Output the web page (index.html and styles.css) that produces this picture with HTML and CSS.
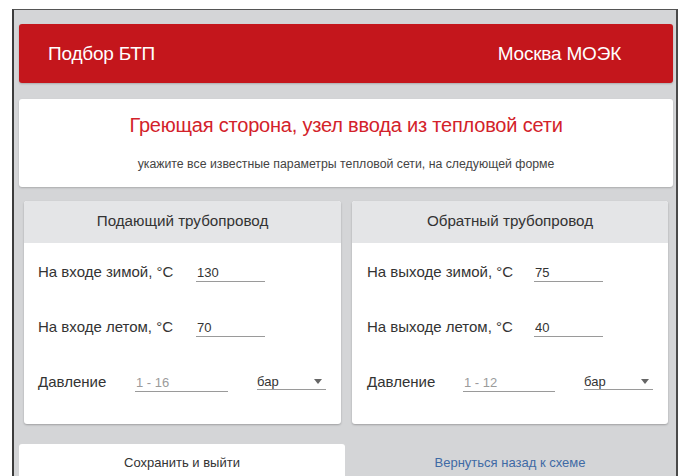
FILE: index.html
```html
<!DOCTYPE html>
<html lang="ru">
<head>
<meta charset="utf-8">
<title>Подбор БТП</title>
<link rel="stylesheet" href="styles.css">
</head>
<body>
<div class="frame">
  <header class="topbar">
    <span class="topbar-title">Подбор БТП</span>
    <span class="topbar-city">Москва МОЭК</span>
  </header>

  <section class="intro">
    <h1 class="intro-title">Греющая сторона, узел ввода из тепловой сети</h1>
    <p class="intro-hint">укажите все известные параметры тепловой сети, на следующей форме</p>
  </section>

  <div class="panels">
    <section class="panel panel-supply">
      <div class="panel-head">Подающий трубопровод</div>
      <div class="panel-body">
        <div class="row">
          <label class="row-label">На входе зимой, °C</label>
          <input class="field field-temp" type="text" value="130">
        </div>
        <div class="row">
          <label class="row-label">На входе летом, °C</label>
          <input class="field field-temp" type="text" value="70">
        </div>
        <div class="row">
          <label class="row-label row-label-short">Давление</label>
          <input class="field field-pressure" type="text" placeholder="1 - 16">
          <div class="unit">
            <span>бар</span>
            <span class="unit-caret"></span>
          </div>
        </div>
      </div>
    </section>

    <section class="panel panel-return">
      <div class="panel-head">Обратный трубопровод</div>
      <div class="panel-body">
        <div class="row">
          <label class="row-label">На выходе зимой, °C</label>
          <input class="field field-temp" type="text" value="75">
        </div>
        <div class="row">
          <label class="row-label">На выходе летом, °C</label>
          <input class="field field-temp" type="text" value="40">
        </div>
        <div class="row">
          <label class="row-label row-label-short">Давление</label>
          <input class="field field-pressure" type="text" placeholder="1 - 12">
          <div class="unit">
            <span>бар</span>
            <span class="unit-caret"></span>
          </div>
        </div>
      </div>
    </section>
  </div>

  <div class="actions">
    <button class="btn-save" type="button">Сохранить и выйти</button>
    <a class="link-back" href="#">Вернуться назад к схеме</a>
  </div>
</div>
</body>
</html>
```

FILE: styles.css
```css
* {
  box-sizing: border-box;
}

html, body {
  margin: 0;
  padding: 0;
  background: #ffffff;
  overflow: hidden;
}

body {
  font-family: "Liberation Sans", Arial, sans-serif;
  color: #333;
}

.frame {
  margin: 9px 4px 0 12px;
  height: 480px;
  background: #d4d5d7;
  border-top: 1px solid #555;
  border-left: 2px solid #3c3c3c;
  border-right: 2px solid #4a4a4a;
  padding: 14px 3px 0 5px;
}

/* red application bar */
.topbar {
  height: 59px;
  background: #c4161c;
  border-radius: 3px;
  box-shadow: 0 1px 2px rgba(0, 0, 0, 0.2);
  color: #fff;
  display: flex;
  align-items: center;
  justify-content: space-between;
  padding: 0 52px 0 29px;
  font-size: 19px;
  letter-spacing: -0.2px;
}

/* intro card */
.intro {
  margin-top: 16px;
  height: 88px;
  background: #fff;
  border-radius: 3px;
  box-shadow: 0 1px 2px rgba(0, 0, 0, 0.2);
  text-align: center;
  padding-top: 14px;
}

.intro-title {
  margin: 0;
  font-weight: 400;
  font-size: 20px;
  line-height: 24px;
  color: #d3222a;
  letter-spacing: -0.2px;
}

.intro-hint {
  margin: 20px 0 0;
  font-size: 12.3px;
  line-height: 14px;
  color: #444;
}

/* the two pipeline panels */
.panels {
  margin-top: 14px;
  padding: 0 5px;
  display: grid;
  grid-template-columns: 317px 316px;
  column-gap: 11px;
}

.panel {
  background: #fff;
  border-radius: 3px;
  box-shadow: 0 1px 2px rgba(0, 0, 0, 0.25);
  height: 223px;
  overflow: hidden;
}

.panel-head {
  height: 42px;
  padding-bottom: 3px;
  background: #e4e5e7;
  display: flex;
  align-items: center;
  justify-content: center;
  font-size: 15.2px;
  color: #333;
}

.panel-body {
  padding-top: 20px;
  display: flex;
  flex-direction: column;
  gap: 38px;
}

.panel-supply .panel-body {
  padding-left: 14px;
}

.panel-return .panel-body {
  padding-left: 15px;
}

.row {
  display: flex;
  align-items: baseline;
  height: 17px;
}

.row-label {
  font-size: 15px;
  color: #333;
  flex: none;
}

.panel-supply .row-label {
  width: 158px;
}

.panel-return .row-label {
  width: 167px;
}

.panel-supply .row-label-short {
  width: 97px;
}

.panel-return .row-label-short {
  width: 96px;
}

.field {
  font-family: inherit;
  font-size: 13px;
  color: #333;
  border: 0;
  border-bottom: 1px solid #9a9a9a;
  background: transparent;
  height: 17px;
  padding: 0 0 0 1px;
  outline: none;
}

.field::placeholder {
  color: #9b9b9b;
}

.field-temp {
  width: 69px;
}

.field-pressure {
  width: 93px;
}

.panel-return .field-pressure {
  width: 92px;
}

.unit {
  margin-left: 29px;
  width: 69px;
  height: 17px;
  border-bottom: 1px solid #9a9a9a;
  display: flex;
  align-items: center;
  justify-content: space-between;
  font-size: 13px;
  color: #333;
  padding: 0 4px 0 0;
  align-self: flex-end;
}

.unit-caret {
  width: 0;
  height: 0;
  border-left: 4.5px solid transparent;
  border-right: 4.5px solid transparent;
  border-top: 5px solid #666;
}

/* bottom action row */
.actions {
  margin-top: 20px;
  display: grid;
  grid-template-columns: 326px 1fr;
  column-gap: 2px;
}

.btn-save {
  height: 40px;
  background: #fff;
  border: 0;
  border-radius: 3px;
  font-family: inherit;
  font-size: 13px;
  color: #333;
  padding: 0 0 4px;
}

.link-back {
  height: 40px;
  display: flex;
  align-items: center;
  justify-content: center;
  padding-bottom: 4px;
  font-size: 13px;
  color: #3f6aa5;
  text-decoration: none;
}
```
